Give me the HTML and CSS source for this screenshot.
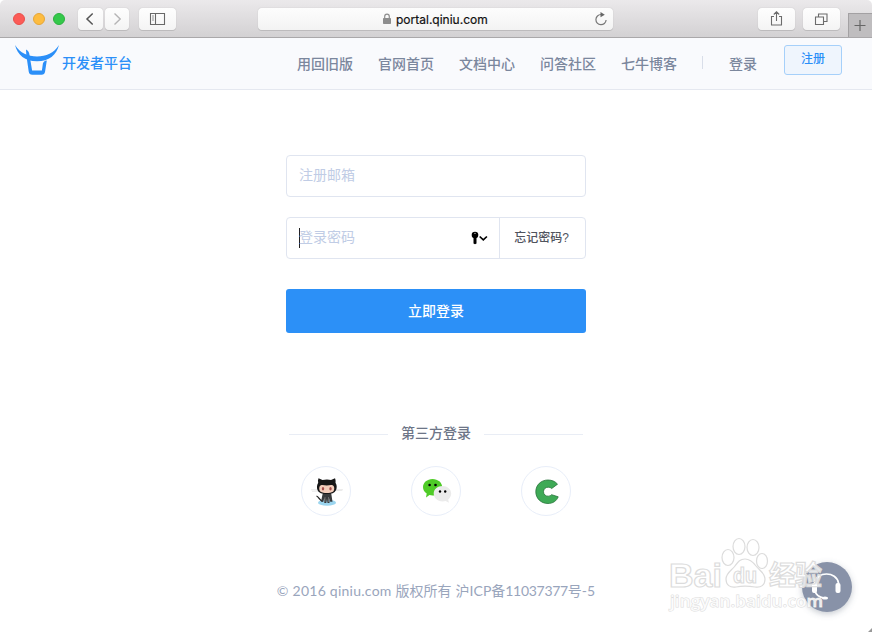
FILE: index.html
```html
<!DOCTYPE html>
<html lang="zh-CN">
<head>
<meta charset="utf-8">
<title>开发者平台</title>
<link rel="stylesheet" href="styles.css">
</head>
<body>
<div class="window">
  <div class="toolbar">
    <div class="lights"><i class="light red"></i><i class="light yellow"></i><i class="light green"></i></div>
    <div class="history">
      <span class="tool"><svg width="25" height="22" viewBox="0 0 25 22"><path d="M14.700 5.500 9 11l5.700 5.500" fill="none" stroke="#555" stroke-width="1.500"/></svg></span>
      <span class="tool"><svg width="24" height="22" viewBox="0 0 24 22"><path d="M9.500 5.500 15.200 11l-5.700 5.500" fill="none" stroke="#b5b4b5" stroke-width="1.400"/></svg></span>
    </div>
    <span class="tool wide sidebar"><svg width="37" height="22" viewBox="0 0 37 22"><path d="M11.500 5.500h14v11h-14zM16.500 5.500v11" fill="none" stroke="#686868" stroke-width="1.100"/><path d="M13 8h2M13 10h2M13 12h2" stroke="#777" stroke-width=".8"/></svg></span>
    <div class="address">
      <svg class="lock" width="10" height="12" viewBox="0 0 10 12"><rect x="1" y="5" width="8" height="6" rx=".7" fill="#8d8d8d"/><path d="M2.700 5.500V3.500a2.300 2.300 0 0 1 4.600 0v2" fill="none" stroke="#8d8d8d" stroke-width="1.200"/></svg>
      <span class="url">portal.qiniu.com</span>
      <svg class="reload" width="14" height="15" viewBox="0 0 14 15"><path d="M7 2.500A5.100 5.100 0 1 0 12.100 8" fill="none" stroke="#777" stroke-width="1.200"/><path d="M6.500 0 10.800 2.700 6.500 5.200z" fill="#666"/></svg>
    </div>
    <span class="tool wide share"><svg width="37" height="22" viewBox="0 0 37 22"><path d="M16 8.500h-2.500v8.500h10V8.500H21M18.500 13V4M15.800 6.500l2.700-2.800 2.700 2.800" fill="none" stroke="#6b6b6b" stroke-width="1.100"/></svg></span>
    <span class="tool wide tabs"><svg width="37" height="22" viewBox="0 0 37 22"><path d="M12.500 9h8v7.500h-8zM15.500 9V6H24v7.500h-3.500" fill="none" stroke="#6b6b6b" stroke-width="1.100"/></svg></span>
    <span class="newtab"><svg width="24" height="24" viewBox="0 0 24 24"><path d="M11 6v11M5.500 11.500h11" stroke="#666" stroke-width="1.200"/></svg></span>
  </div>

  <header class="header">
    <svg class="logo" width="44" height="31" viewBox="0 0 44 31"><path d="M0 0C5 8 13 11.500 22 11.500S39 8 44 0C41.500 10 34 16.300 22 16.300S2.500 10 0 0Z" fill="#2b8ff8"/><path d="M11 4.500c2.300 1 3.300 3 3.500 5.500l2.600 15.500h9.800l1-7c.4-1.400 1.700-2.700 3.900-2.900l-1.700 10.900c-.4 2.400-1.500 3.200-3.500 3.200H17.400c-2.300 0-3.300-1-3.700-3.200L11.300 10Z" fill="#2b8ff8"/></svg>
    <span class="brand">开发者平台</span>
    <nav class="nav"><a>用回旧版</a><a>官网首页</a><a>文档中心</a><a>问答社区</a><a>七牛博客</a></nav>
    <i class="divider"></i>
    <a class="login">登录</a>
    <a class="register">注册</a>
  </header>

  <main class="main">
    <div class="field"><span class="placeholder">注册邮箱</span></div>
    <div class="field password">
      <i class="caret"></i><span class="placeholder">登录密码</span>
      <svg class="key" width="18" height="14" viewBox="0 0 18 14"><circle cx="4" cy="4" r="3.300"/><path d="M2.500 6h3v6.500L4 13.300l-1.500-.8z"/><circle cx="4" cy="2.300" r=".6" fill="#fff"/><path d="m8.700 5.500 3.600 3.400 3.600-3.400" fill="none" stroke="#000" stroke-width="1.700"/></svg>
      <a class="forgot">忘记密码?</a>
    </div>
    <div class="submit">立即登录</div>

    <div class="third"><i></i><span>第三方登录</span><i></i></div>
    <div class="socials">
      <span class="social"><svg width="48" height="48" viewBox="0 0 48 48"><ellipse cx="25" cy="35.700" rx="9" ry="3" fill="#9bd5ef"/><path d="M9 22.800h32M10 24.300l30-1" stroke="#e5e5e5" stroke-width=".9"/><path d="M21 34c-4 0-3.500-4-6.500-5" fill="none" stroke="#222" stroke-width="1.300"/><path d="M21 25h8l1.500 9.800h-2.300L27.500 31v5h-2l-.5-4-.7 4h-2v-5l-1 3.800H19Z" fill="#393b3d"/><path d="M23 30v5M26.500 30v5" stroke="#8c8c8c" stroke-width=".6"/><path d="M16.500 11.200l4 1.800c3-.7 6-.7 8.500 0l4-1.800c.7 1.500.7 3 .5 4.500 1.500 2 1.500 5 .6 7.300-1.400 3-4.600 4-9.300 4s-8-1-9.300-4c-.9-2.500-.7-5.300.7-7.300-.4-1.500-.3-3 .3-4.500Z" fill="#171717"/><path d="M18.500 18.500c2-1 4 0 6.200 0s4.500-1 6.300 0c1.800 1.200 1.600 5-.1 6.200-2.800 1.700-9.500 1.700-12.200 0-1.800-1.200-2-5-.2-6.200Z" fill="#f3cdbb"/><ellipse cx="21" cy="21.700" rx="1.200" ry="1.700" fill="#a64f4c"/><ellipse cx="28.500" cy="21.700" rx="1.200" ry="1.700" fill="#a64f4c"/></svg></span>
      <span class="social"><svg width="48" height="48" viewBox="0 0 48 48"><path d="M20.500 12c5.500 0 9.700 3.600 9.700 8.200s-4.200 8.300-9.700 8.300c-1 0-2-.1-3-.4l-3.500 2.500.7-4C12.300 25 11 22.800 11 20.200c0-4.600 4.200-8.200 9.500-8.200Z" fill="#4fcb27"/><circle cx="17.600" cy="18" r="1.300"/><circle cx="23.500" cy="18" r="1.300"/><path d="M30.500 19c5 0 8.700 3.300 8.700 7.600 0 2.500-1.200 4.500-3 5.900l.7 3.300-3.200-1.900c-1 .3-2.100.5-3.200.5-5 0-8.800-3.400-8.800-7.800s3.800-7.600 8.800-7.600Z" fill="#ebebeb"/><circle cx="28" cy="24.500" r="1.200"/><circle cx="33.200" cy="24.500" r="1.200"/></svg></span>
      <span class="social"><svg width="48" height="48" viewBox="0 0 48 48"><path d="M35.500 17.200C33.500 14.600 30 13 26 13c-7 0-12.200 5-12.200 11.700S19 36.500 26 36.500c4.800 0 8.700-2.600 10.200-6.700l-6.600-2.100c-.8 1-2 1.500-3.400 1.500-2.700 0-4.700-1.800-4.700-4.500s2-4.500 4.700-4.500c1.500 0 2.600.4 3.500 1.300Z" fill="#3eaa56" stroke="#27743a" stroke-width=".8"/></svg></span>
    </div>
    <footer class="footer"><span class="latin">© 2016 qiniu.com</span> <span>版权所有</span> <span>沪ICP备<span class="digits">11037377</span>号-5</span></footer>
  </main>

  <svg class="overlay" width="212" height="102" viewBox="0 0 212 102">
    <defs><filter id="shadow" x="-30%" y="-30%" width="160%" height="160%"><feDropShadow dx="0" dy="2" stdDeviation="3" flood-color="#59657a" flood-opacity=".35"/></filter></defs>
    <circle cx="167" cy="57" r="25" fill="#8892a8" filter="url(#shadow)"/>
    <path d="M154.500 54v-1c2-12 22-12 24 0v1M155 61c1 4 3 6 9 7" fill="none" stroke="#fff" stroke-width="1.700"/>
    <rect x="152" y="53" width="5" height="10" rx="2" fill="#fff"/><rect x="175.500" y="53" width="5" height="10" rx="2" fill="#fff"/><ellipse cx="165" cy="68" rx="3" ry="1.600" fill="#fff"/>
    <g class="mark">
      <ellipse cx="68" cy="27.500" rx="6" ry="8"/><ellipse cx="79" cy="16.500" rx="6" ry="8"/><ellipse cx="93" cy="17.500" rx="6" ry="8"/><ellipse cx="102" cy="31" rx="5.500" ry="7.500"/>
      <path d="M85 29c5 0 8 3 11 7s9 7 9 13-4 9-10 8c-6-1-14-1-19 0-6 1-10-2-10-8s6-9 9-13 5-7 10-7Z"/>
      <text x="9" y="57" class="bai" textLength="53" lengthAdjust="spacingAndGlyphs">Bai</text>
      <text x="73" y="53" class="du" textLength="24" lengthAdjust="spacingAndGlyphs">du</text>
      <text x="109" y="55" class="jing" textLength="53">经验</text>
      <text x="10" y="77" class="site" textLength="153" lengthAdjust="spacingAndGlyphs">jingyan.baidu.com</text>
    </g>
    <path d="M208 102l4-4v4z" fill="#999"/>
  </svg>
</div>
</body>
</html>
```
FILE: styles.css
```css
* { box-sizing: border-box; }
body {
  margin: 0;
  font-family: "Liberation Sans", "Noto Sans CJK SC", sans-serif;
  background: #fff;
}
svg { display: block; flex: none; }
.window { position: relative; width: 872px; height: 632px; overflow: hidden; border-radius: 5px 5px 0 0; }

.toolbar {
  height: 38px;
  display: flex;
  align-items: flex-start;
  padding: 8px 0 0 13px;
  background: linear-gradient(#ebe9eb, #d3d1d3);
  border-bottom: 1px solid #aaa8aa;
}
.lights { display: flex; gap: 8px; padding-top: 5px; width: 65px; }
.light { width: 12px; height: 12px; border-radius: 50%; }
.red { background: #fc5b57; border: 1px solid #e8504c; }
.yellow { background: #fdbc40; border: 1px solid #e5a638; }
.green { background: #34c84a; border: 1px solid #2bb03f; }
.history { display: flex; gap: 2px; }
.tool {
  height: 22px;
  border-radius: 4px;
  background: linear-gradient(#fefefe, #f4f4f4);
  box-shadow: 0 0 1px #aaa, 0 1px 0 #bfbdbf;
}
.sidebar { margin-left: 10px; }
.address {
  width: 355px;
  height: 22px;
  margin-left: 82px;
  padding: 0 5px 0 124px;
  display: flex;
  align-items: center;
  border-radius: 4px;
  background: linear-gradient(#fdfdfd, #f3f3f3);
  box-shadow: 0 0 1px #aaa, 0 1px 0 #bfbdbf;
}
.url { margin-left: 4px; font: 12px/22px Inter, sans-serif; color: #111; white-space: nowrap; padding-top: 2px; -webkit-text-stroke: .2px #111; }
.reload { margin-left: auto; }
.share { margin-left: 145px; }
.tabs { margin-left: 8px; }
.newtab { margin: 5px 0 0 8px; width: 24px; height: 24px; background: #bfbdbf; border: solid #a3a1a3; border-width: 1px 0 0 1px; }

.header {
  height: 52px;
  display: flex;
  align-items: flex-start;
  padding-left: 15px;
  background: #f9fafd;
  border-bottom: 1px solid #e5e8f0;
  font-size: 14px;
  font-weight: 500;
  line-height: 20px;
  color: #7b879d;
}
.logo { margin-top: 7px; }
.brand { width: 238px; margin: 15px 0 0 3px; color: #2b8ff8; }
.nav { display: flex; gap: 25px; padding-top: 16px; margin-left: -3px; }
.nav a { white-space: nowrap; }
.divider { width: 1px; height: 13px; margin: 18px 0 0 25px; background: #d9dee9; }
.login { margin: 16px 0 0 26px; white-space: nowrap; }
.register {
  width: 58px;
  height: 30px;
  margin: 7px 0 0 27px;
  border: 1px solid #a6d0fa;
  border-radius: 3px;
  background: #eff5fd;
  color: #2b8ff8;
  font-size: 12px;
  line-height: 27px;
  text-align: center;
}

.main { width: 300px; margin: 65px auto 0; }
.field {
  height: 42px;
  display: flex;
  align-items: center;
  padding-left: 12px;
  border: 1px solid #e0e5f0;
  border-radius: 4px;
}
.placeholder { font-size: 14px; line-height: 20px; color: #c0cce5; margin-top: -2px; }
.password { margin-top: 20px; }
.caret { width: 1px; height: 20px; background: #222; margin-right: -1px; }
.key { margin-left: auto; }
.forgot {
  width: 86px;
  height: 40px;
  margin-left: 10px;
  padding-right: 2px;
  border-left: 1px solid #e0e5f0;
  text-align: center;
  font-size: 12px;
  font-weight: 500;
  line-height: 41px;
  color: #50545e;
}
.submit {
  height: 44px;
  margin-top: 30px;
  border-radius: 3px;
  background: #2c90f7;
  color: #fff;
  text-align: center;
  font-size: 14px;
  font-weight: 500;
  line-height: 44px;
}
.third {
  display: flex;
  align-items: center;
  justify-content: space-between;
  height: 20px;
  margin-top: 89px;
  padding: 0 3px;
  font-size: 14px;
  font-weight: 500;
  color: #6d7587;
}
.third i { width: 99px; height: 1px; margin-top: 5px; background: #e9edf5; }
.socials { display: flex; justify-content: space-between; margin-top: 24px; padding: 0 15px; }
.social { width: 50px; height: 50px; border: 1px solid #e8eef9; border-radius: 50%; }
.footer {
  display: flex;
  justify-content: center;
  gap: 4px;
  margin: 65px -20px 0;
  font: 14px/20px Lato, "Noto Sans CJK SC", sans-serif;
  color: #99a5bc;
  white-space: nowrap;
}
.latin { letter-spacing: .25px; }
.digits { letter-spacing: -.3px; }

.overlay { position: absolute; left: 660px; top: 530px; }
.mark { fill: rgba(255, 255, 255, .8); stroke: #dcdcdc; stroke-width: 1.200px; }
.bai { font: bold 34px "Liberation Sans", sans-serif; }
.du { font: bold 22px "Liberation Sans", sans-serif; }
.jing { font: bold 27px "Noto Sans CJK SC", sans-serif; }
.site { font: 600 17px "Open Sans", sans-serif; stroke-width: 1px; paint-order: stroke; }
```
